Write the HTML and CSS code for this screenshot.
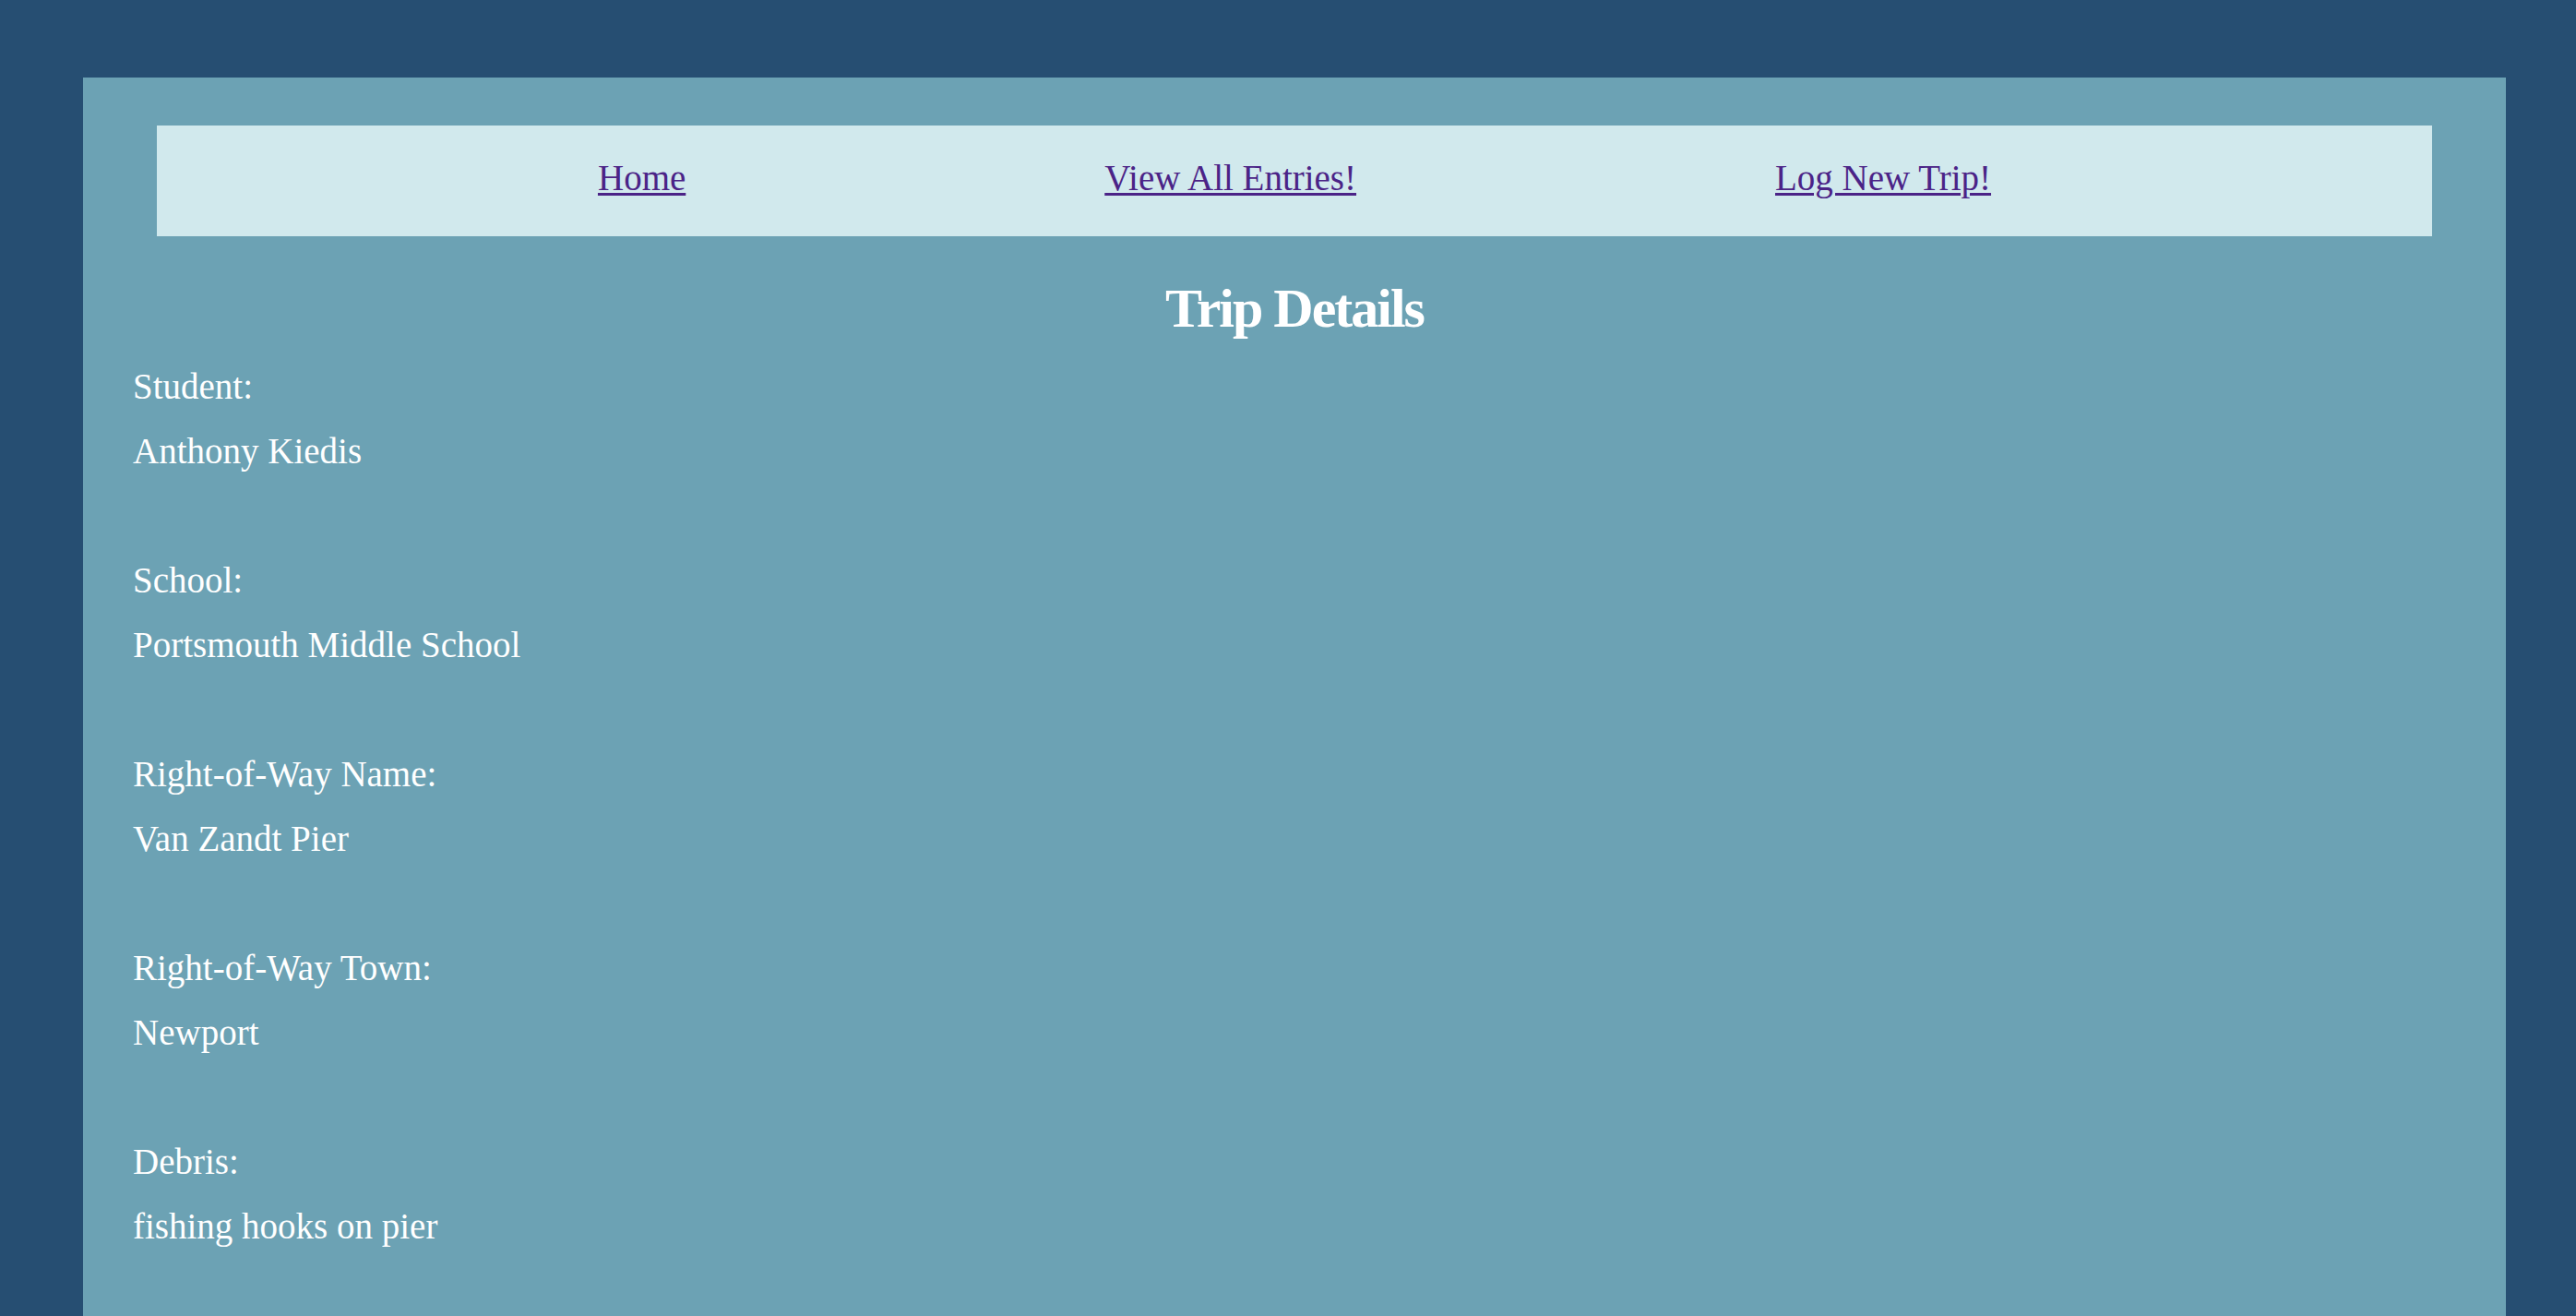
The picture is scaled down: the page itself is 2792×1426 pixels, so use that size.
FILE: index.html
```html
<!DOCTYPE html>
<html lang="en">
<head>
<meta charset="utf-8">
<title>Trip Details</title>
<link rel="stylesheet" href="styles.css">
</head>
<body>
<div class="page">
  <nav class="nav">
    <a href="#" class="nav-link">Home</a>
    <a href="#" class="nav-link">View All Entries!</a>
    <a href="#" class="nav-link">Log New Trip!</a>
  </nav>
  <h1 class="title">Trip Details</h1>
  <div class="details">
    <div class="field">
      <div class="label">Student:</div>
      <div class="value">Anthony Kiedis</div>
    </div>
    <div class="field">
      <div class="label">School:</div>
      <div class="value">Portsmouth Middle School</div>
    </div>
    <div class="field">
      <div class="label">Right-of-Way Name:</div>
      <div class="value">Van Zandt Pier</div>
    </div>
    <div class="field">
      <div class="label">Right-of-Way Town:</div>
      <div class="value">Newport</div>
    </div>
    <div class="field">
      <div class="label">Debris:</div>
      <div class="value">fishing hooks on pier</div>
    </div>
  </div>
</div>
</body>
</html>
```
FILE: styles.css
```css
html, body {
  margin: 0;
  padding: 0;
  background: #264e72;
}

body {
  font-family: "Liberation Serif", "Times New Roman", serif;
  color: #ffffff;
}

.page {
  margin: 84px 76px 0 90px;
  padding: 52px 0 80px 0;
  background: #6ca2b4;
  min-height: 1400px;
  box-sizing: border-box;
}

.nav {
  margin: 0 80px;
  height: 120px;
  box-sizing: border-box;
  padding: 22px 24px 0 24px;
  background: #d1e9ed;
  display: flex;
  justify-content: space-evenly;
  align-items: flex-start;
  line-height: 70px;
}

.nav-link {
  font-size: 39px;
  color: #4b2387;
  text-decoration: underline;
  text-decoration-thickness: 3px;
  text-underline-offset: 3px;
}

.title {
  margin: 43px 0 15px 0;
  font-size: 60px;
  line-height: 70px;
  font-weight: bold;
  letter-spacing: -2px;
  text-align: center;
  color: #ffffff;
}

.details {
  padding-left: 54px;
  font-size: 39px;
  line-height: 70px;
}

.field {
  margin-bottom: 70px;
}
```
